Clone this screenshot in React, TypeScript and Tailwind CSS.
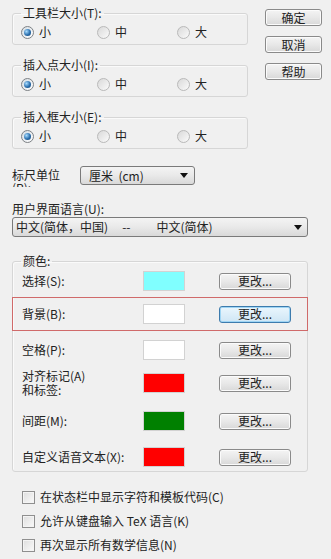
import type { ReactNode } from "react";

const FONT = "[font-family:'Noto_Sans_CJK_SC','Liberation_Sans',sans-serif]";

function Radio({ checked }: { checked?: boolean }) {
  if (checked) {
    return (
      <span className="flex h-[13px] w-[13px] items-center justify-center rounded-full border border-[#7d8185] bg-gradient-to-br from-[#d6dde3] to-[#ffffff]">
        <span className="h-[7px] w-[7px] rounded-full bg-[radial-gradient(circle_at_35%_35%,#a8dcff,#2a6fae_55%,#143f6a)]" />
      </span>
    );
  }
  return (
    <span className="h-[13px] w-[13px] rounded-full border border-[#b9b9b9] bg-gradient-to-br from-[#d9d9d9] to-[#fbfbfb]" />
  );
}

function SizeGroup({ title, first }: { title: string; first?: boolean }) {
  const opts = [
    { label: "小", w: "w-[76px]", checked: true },
    { label: "中", w: "w-[80px]" },
    { label: "大", w: "w-[60px]" },
  ];
  return (
    <fieldset
      className={`h-[39px] rounded-[3px] border border-[#d6d6d6] shadow-[inset_1px_1px_0_#fafafa] ${first ? "" : "mt-[13px]"}`}
    >
      <legend className="ml-[8px] px-[2px] leading-[14px]">{title}</legend>
      <div className="mt-[5px] flex items-center pl-[8px] leading-[14px]">
        {opts.map((o) => (
          <div key={o.label} className={`flex items-center gap-[5px] ${o.w}`}>
            <Radio checked={o.checked} />
            <span>{o.label}</span>
          </div>
        ))}
      </div>
    </fieldset>
  );
}

function Btn({ children, w, focused }: { children: ReactNode; w: string; focused?: boolean }) {
  return (
    <div
      className={`flex h-[17px] items-center justify-center rounded-[3px] border ${w} ${
        focused
          ? "border-[#3d7bad] bg-gradient-to-b from-[#eaf6fd] to-[#cfe6f5] shadow-[inset_0_0_0_1px_#9fd5f4]"
          : "border-[#8a8a8a] bg-gradient-to-b from-[#f4f4f4] via-[#e8e8e8] to-[#d8d8d8] shadow-[inset_0_0_0_1px_#fbfbfb]"
      } leading-[14px] text-[#222]`}
    >
      {children}
    </div>
  );
}

function Arrow() {
  return (
    <svg width="8" height="5" viewBox="0 0 8 5">
      <path d="M0 0 L8 0 L4 5 Z" fill="#111" />
    </svg>
  );
}

function ColorRow({ label, color, h, mt, focused }: { label: ReactNode; color: string; h: string; mt: string; focused?: boolean }) {
  return (
    <div className={`flex items-center ${h} ${mt}`}>
      <div className="w-[130px] pl-[9px] leading-[14px]">{label}</div>
      <div className="h-[20px] w-[42px] border border-[#d2d2d2]" style={{ background: color }} />
      <div className="ml-[34px]">
        <Btn w="w-[72px]" focused={focused}>
          更改...
        </Btn>
      </div>
    </div>
  );
}

function Check({ text }: { text: ReactNode }) {
  return (
    <div className="flex h-[24px] items-center gap-[5px]">
      <span className="h-[13px] w-[13px] border border-[#8f8f8f] bg-gradient-to-br from-[#dedede] to-[#fafafa] shadow-[inset_0_0_0_1px_#f4f4f4]" />
      <span className="leading-[14px]">{text}</span>
    </div>
  );
}

export default function App() {
  return (
    <div className={`h-[559px] w-[331px] overflow-hidden bg-[#f0f0f0] pl-[12px] pt-[6px] text-[12px] text-[#222] ${FONT}`}>
      <div className="flex">
        <div className="flex w-[236px] flex-col">
          <SizeGroup title="工具栏大小(T):" first />
          <SizeGroup title="插入点大小(I):" />
          <SizeGroup title="插入框大小(E):" />
        </div>
        <div className="ml-[17px] flex flex-col gap-[10px] pt-[3px]">
          <Btn w="w-[57px]">确定</Btn>
          <Btn w="w-[57px]">取消</Btn>
          <Btn w="w-[57px]">帮助</Btn>
        </div>
      </div>

      <div className="mt-[17px] flex h-[19px]">
        <div className="h-[21px] w-[68px] overflow-hidden pt-[2px] leading-[13px]">
          标尺单位
          <br />
          (R):
        </div>
        <div className="flex h-[19px] w-[115px] items-center justify-between rounded-[3px] border border-[#7a7a7a] bg-gradient-to-b from-[#f4f4f4] via-[#e9e9e9] to-[#d9d9d9] pl-[8px] pr-[6px] leading-[14px]">
          <span className="whitespace-pre">厘米  (cm)</span>
          <Arrow />
        </div>
      </div>

      <div className="mt-[17px] leading-[14px]">用户界面语言(U):</div>
      <div className="mt-[1px] flex h-[20px] w-[296px] items-center rounded-[3px] border border-[#7a7a7a] bg-gradient-to-b from-[#f4f4f4] via-[#e9e9e9] to-[#d9d9d9] pl-[3px] pr-[5px] leading-[14px]">
        <span>中文(简体，中国)</span>
        <span className="ml-[14px]">--</span>
        <span className="ml-[26px]">中文(简体)</span>
        <span className="ml-auto">
          <Arrow />
        </span>
      </div>

      <fieldset className="mt-[17px] h-[218px] w-[296px] rounded-[3px] border border-[#d6d6d6] shadow-[inset_1px_1px_0_#fafafa]">
        <legend className="ml-[8px] px-[2px] leading-[14px]">颜色:</legend>
        <ColorRow label="选择(S):" color="#80ffff" h="h-[26px]" mt="mt-0" />
        <div className="-mx-[1px] mt-[3px] border border-[#d06a6a]">
          <ColorRow label="背景(B):" color="#ffffff" h="h-[32px]" mt="mt-0" focused />
        </div>
        <ColorRow label="空格(P):" color="#ffffff" h="h-[26px]" mt="mt-[6px]" />
        <ColorRow
          label={
            <>
              对齐标记(A)
              <br />
              和标签:
            </>
          }
          color="#ff0000"
          h="h-[28px]"
          mt="mt-[6px]"
        />
        <ColorRow label="间距(M):" color="#008000" h="h-[26px]" mt="mt-[11px]" />
        <ColorRow label="自定义语音文本(X):" color="#ff0000" h="h-[22px]" mt="mt-[12px]" />
      </fieldset>

      <div className="mt-[13px] pl-[10px]">
        <Check text="在状态栏中显示字符和模板代码(C)" />
        <Check text="允许从键盘输入 TeX 语言(K)" />
        <Check text="再次显示所有数学信息(N)" />
      </div>
    </div>
  );
}
